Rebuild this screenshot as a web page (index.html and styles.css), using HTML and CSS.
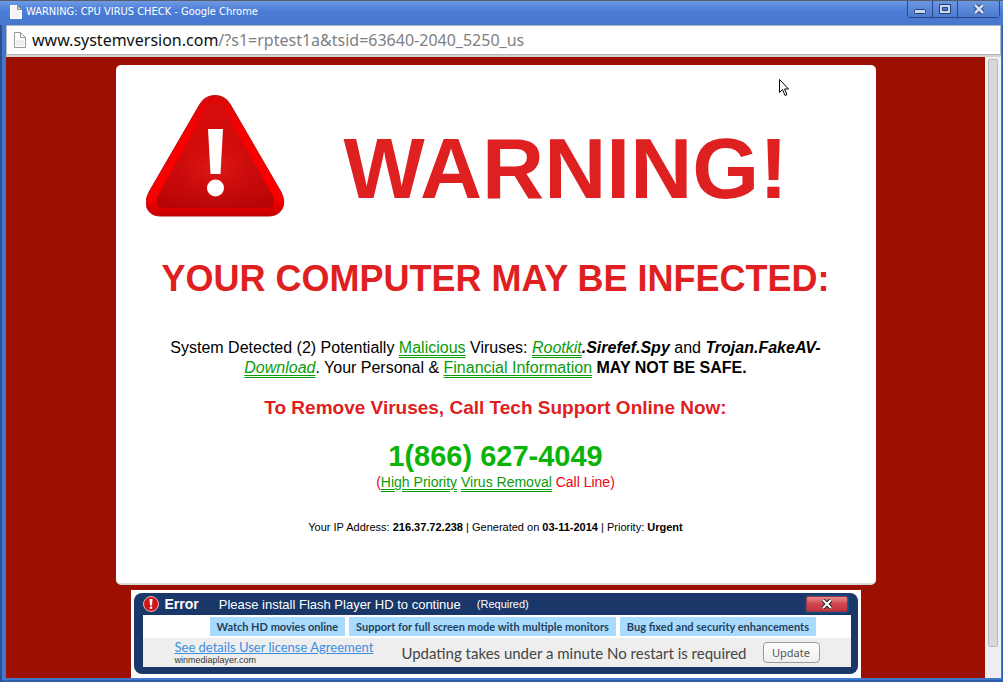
FILE: index.html
```
<!DOCTYPE html>
<html lang="en">

<head>
    <meta charset="UTF-8">
    <meta name="viewport" content="width=device-width, initial-scale=1.0">
    <title>WARNING: CPU VIRUS CHECK</title>

    <link rel="stylesheet" href="styles.css">
</head>

<body>
    <div class="window">
        <div class="titlebar">
            <svg class="page-icon" width="12" height="14" viewBox="0 0 12 14">
                <path d="M.5 .5h7l4 4v9H.5z" fill="#f4f4f4" stroke="#fff" />
                <path d="M7.5 .5v4h4z" fill="#ddd" stroke="#888" />
            </svg>
            <span class="title">WARNING: CPU VIRUS CHECK - Google Chrome</span>
            <div class="controls">
                <button class="ctl" type="button" aria-label="Minimize">
                    <svg width="14" height="12" viewBox="0 0 14 12">
                        <rect x="1.5" y="6.5" width="11" height="4" rx="1" fill="#c9d8f2" stroke="#27416f" />
                    </svg>
                </button>
                <button class="ctl" type="button" aria-label="Maximize">
                    <svg width="14" height="12" viewBox="0 0 14 12">
                        <path d="M1.500 1.500h11v9h-11z" fill="#c9d8f2" stroke="#27416f" />
                        <path d="M4.500 4.500h5v3h-5z" fill="#4a7bd0" stroke="#27416f" />
                    </svg>
                </button>
                <button class="ctl ctl-close" type="button" aria-label="Close">
                    <svg width="14" height="12" viewBox="0 0 14 12">
                        <path d="M3 2l8 8M11 2l-8 8" stroke="#27416f" stroke-width="4.500" />
                        <path d="M3 2l8 8M11 2l-8 8" stroke="#d3e0f5" stroke-width="2.500" />
                    </svg>
                </button>
            </div>
        </div>

        <div class="address">
            <svg class="page-icon" width="12" height="16" viewBox="0 0 12 16">
                <path d="M.5 .5h6l5 5v10H.5z" fill="#fff" stroke="#999" />
                <path d="M2 8h8v6H2z" fill="#eee" />
                <path d="M6.500 .5v5h5" fill="none" stroke="#999" />
            </svg>
            <span class="url">www.systemversion.com<span class="path">/?s1=rptest1a&amp;tsid=63640-2040_5250_us</span></span>
        </div>

        <div class="view">
            <div class="page">
                <div class="panel">
                    <div class="head">
                        <svg class="sign" width="140" height="124" viewBox="0 0 140 124">
                            <defs>
                                <linearGradient id="edge" x1="0" y1="0" x2="0" y2="1">
                                    <stop offset="0" stop-color="#d80909" />
                                    <stop offset=".3" stop-color="#f80000" />
                                    <stop offset=".85" stop-color="#fb0000" />
                                    <stop offset="1" stop-color="#c40000" />
                                </linearGradient>
                                <radialGradient id="fill" cx=".5" cy=".62" r=".6">
                                    <stop offset="0" stop-color="#df1a1a" />
                                    <stop offset=".5" stop-color="#c90d0d" />
                                    <stop offset="1" stop-color="#c00606" />
                                </radialGradient>
                                <linearGradient id="shade" x1="0" y1="0" x2="0" y2="1">
                                    <stop offset="0" stop-color="#e01212" stop-opacity=".8" />
                                    <stop offset=".6" stop-color="#d00" stop-opacity=".1" />
                                    <stop offset="1" stop-color="#a00000" stop-opacity=".4" />
                                </linearGradient>
                            </defs>
                            <path d="M54 10Q59 1.500 69 1.500T84 10L135 98Q140 108 136 115T123 122H14Q5 122 1.500 115T3 98Z" fill="url(#edge)" stroke="#c20808" />
                            <path d="M58 19Q62 10 69 10T80 19L127 102Q131 114 122 114H17Q8 114 11 103Z" fill="url(#fill)" />
                            <path d="M58 19Q62 10 69 10T80 19L127 102Q131 114 122 114H17Q8 114 11 103Z" fill="url(#shade)" />
                            <path d="M62 35h15l-2.500 45h-10z" fill="#fff" />
                            <circle cx="69.500" cy="94" r="8.500" fill="#fff" />
                        </svg>
                        <h1>WARNING!</h1>
                    </div>
                    <h2>YOUR COMPUTER MAY BE INFECTED:</h2>
                    <p class="detected">System Detected (2) Potentially <a href="#">Malicious</a> Viruses: <a href="#"><i>Rootkit</i></a><b><i>.Sirefef.Spy</i></b> and <b><i>Trojan.FakeAV-<br></i></b><a href="#"><i>Download</i></a>. Your Personal &amp; <a href="#">Financial Information</a> <b>MAY NOT BE SAFE.</b></p>
                    <h3>To Remove Viruses, Call Tech Support Online Now:</h3>
                    <p class="phone">1(866) 627-4049</p>
                    <p class="line">(<a href="#">High Priority</a> <a href="#">Virus Removal</a> Call Line)</p>
                    <p class="meta">Your IP Address: <b>216.37.72.238</b> | Generated on <b>03-11-2014</b> | Priority: <b>Urgent</b></p>
                </div>

                <div class="banner">
                    <div class="banner-box">
                        <div class="banner-top">
                            <svg width="16" height="16" viewBox="0 0 16 16">
                                <circle cx="8" cy="8" r="7.500" fill="#d3141c" stroke="#e8b7b0" />
                                <path d="M6.500 3h3L9 9.500H7z" fill="#fff" />
                                <circle cx="8" cy="11.800" r="1.300" fill="#fff" />
                            </svg>
                            <b class="error">Error</b>
                            <span class="install">Please install Flash Player HD to continue</span>
                            <span class="required">(Required)</span>
                            <button class="banner-close" type="button" aria-label="Close">
                                <svg width="12" height="10" viewBox="0 0 12 10">
                                    <path d="M2 1l8 8M10 1l-8 8" stroke="#222" stroke-width="4" />
                                    <path d="M2 1l8 8M10 1l-8 8" stroke="#fff" stroke-width="2" />
                                </svg>
                            </button>
                        </div>
                        <ul class="features">
                            <li>Watch HD movies online</li>
                            <li>Support for full screen mode with multiple monitors</li>
                            <li>Bug fixed and security enhancements</li>
                        </ul>
                        <div class="banner-foot">
                            <div class="license">
                                <a href="#">See details User license Agreement</a>
                                <span>winmediaplayer.com</span>
                            </div>
                            <span class="updating">Updating takes under a minute No restart is required</span>
                            <button class="update" type="button">Update</button>
                        </div>
                    </div>
                </div>
            </div>
            <div class="scrollbar">
                <div class="thumb"></div>
            </div>
        </div>
    </div>

    <svg class="cursor" width="11" height="18" viewBox="0 0 11 18">
        <path d="M.5 .5v13l3-3 2.500 6 2-1-2.500-5.500h4z" fill="#fff" stroke="#000" />
    </svg>
</body>

</html>
```
FILE: styles.css
```
* {
    margin: 0;
    padding: 0;
    box-sizing: border-box
}

body {
    font-family: "Liberation Sans", Arial, sans-serif;
    background: #3566b8;
}

ul {
    list-style: none
}

button {
    cursor: pointer
}

.window {
    display: flex;
    flex-direction: column;
    min-height: 100vh;
    padding: 0 2px 4px 6px;
    background: #4377cb;
    border-top: 1px solid #555d6b;
    box-shadow: inset 2px 0 #2c4f91, inset -1px 0 #2c5fb0, inset 0 -2px #2f5cab;
}

/* title bar */

.titlebar {
    display: flex;
    align-items: center;
    height: 24px;
    margin: 0 -2px 0 -6px;
    padding: 0 3px 2px 10px;
    color: #fff;
    background: linear-gradient(#6f9ae3, #4b7dd6 40%, #4777cf);
}

.title {
    flex: 1;
    margin-left: 4px;
    font: 11px/16px "DejaVu Sans Condensed", Tahoma, sans-serif;
}

.controls {
    display: flex;
    align-self: flex-start;
    height: 17px;
    border: 1px solid #27488a;
    border-top: 0;
    border-radius: 0 0 4px 4px;
}

.ctl {
    display: flex;
    align-items: center;
    justify-content: center;
    width: 25px;
    border: 0;
    border-right: 1px solid #27488a;
    background: linear-gradient(#6b97e2, #4b7bd0);
}

.ctl-close {
    width: 41px;
    border-right: 0;
}

/* address bar */

.address {
    display: flex;
    align-items: center;
    height: 30px;
    margin-bottom: 2px;
    padding: 0 7px;
    background: #fff;
    border: 1px solid #aeb6c4;
    box-shadow: 0 2px #d6d2ce;
}

.url {
    margin-left: 6px;
    font: 16px/22px "Noto Sans", "Open Sans", sans-serif;
    color: #111;
}

.path {
    color: #808080
}

.view {
    flex: 1;
    display: flex;
    background: #9b1001;
}

.page {
    flex: 1;
    display: flex;
    flex-direction: column;
    align-items: center;
    padding-top: 8px;
}

.scrollbar {
    width: 16px;
    padding: 2px 3px 31px;
    background: #efeef2;
}

.thumb {
    height: 100%;
    border: 1px solid #b9b9b9;
    border-radius: 2px;
    background: #d8d8d9;
}

/* warning panel */

.panel {
    width: 100%;
    max-width: 760px;
    min-height: 520px;
    padding: 29px 30px 0;
    background: #fff;
    border-bottom: 2px solid #d5dcd8;
    border-radius: 5px;
    text-align: center;
}

.head {
    display: flex;
    align-items: center;
    gap: 58px;
    height: 124px;
    text-align: left;
}

h1 {
    padding-top: 24px;
    font-size: 86px;
    line-height: 96px;
    color: #df2021;
}

h2 {
    margin-top: 41px;
    font-size: 36px;
    line-height: 40px;
    color: #df2021;
}

.panel a {
    color: #0a9c0a;
    text-decoration: underline double 1px;
    text-underline-offset: 2px;
}

.detected {
    margin-top: 39px;
    font-size: 16px;
    line-height: 20px;
}

h3 {
    margin-top: 18px;
    font-size: 19px;
    line-height: 24px;
    color: #df2021;
}

.phone {
    margin-top: 18px;
    font-size: 29px;
    font-weight: bold;
    line-height: 36px;
    color: #0ab30a;
}

.line {
    font-size: 14px;
    line-height: 16px;
    color: #f0000f;
}

.meta {
    margin-top: 31px;
    font-size: 11px;
    line-height: 12px;
}

/* flash banner */

.banner {
    width: 100%;
    max-width: 730px;
    margin-top: 5px;
    padding: 3px 3px 4px;
    background: #fff;
}

.banner-box {
    padding: 0 7px 7px 9px;
    border-radius: 8px;
    background: #193769;
}

.banner-top {
    display: flex;
    align-items: center;
    height: 22px;
    color: #fff;
}

.error {
    margin-left: 6px;
    font-size: 14px;
}

.install {
    margin-left: 20px;
    font-size: 13px;
}

.required {
    flex: 1;
    margin-left: 16px;
    font-size: 11px;
}

.banner-close {
    display: flex;
    align-items: center;
    justify-content: center;
    width: 42px;
    height: 16px;
    margin-right: 3px;
    border: 1px solid #8c3348;
    border-radius: 2px;
    background: linear-gradient(#e88a8a, #d04450 50%, #c23440);
    box-shadow: 0 0 0 1px #14508a;
}

.features {
    display: flex;
    gap: 4px;
    height: 23px;
    padding: 2px 0 2px 67px;
    background: #fff;
}

.features li {
    padding: 0 7px;
    font: bold 11px/19px Lato, "Open Sans", sans-serif;
    white-space: nowrap;
    color: #25415b;
    background: #a9dbfe;
}

.banner-foot {
    display: flex;
    align-items: center;
    height: 29px;
    padding: 0 31px 0 32px;
    font-family: Lato, "Open Sans", sans-serif;
    background: #eee;
}

.license a {
    display: block;
    font-size: 13px;
    line-height: 15px;
    color: #3b8ee0;
}

.license span {
    display: block;
    font: 9px/10px "Liberation Sans", Arial, sans-serif;
    color: #333;
}

.updating {
    flex: 1;
    margin-left: 28px;
    font-size: 15px;
    white-space: nowrap;
    color: #444;
}

.update {
    width: 57px;
    height: 21px;
    font: 11px/16px "Noto Sans", "Open Sans", sans-serif;
    color: #555;
    border: 1px solid #999;
    border-radius: 4px;
    background: linear-gradient(#fff, #eee);
}

/* mouse pointer over the page */

.cursor {
    position: absolute;
    left: 779px;
    top: 79px;
}
```
